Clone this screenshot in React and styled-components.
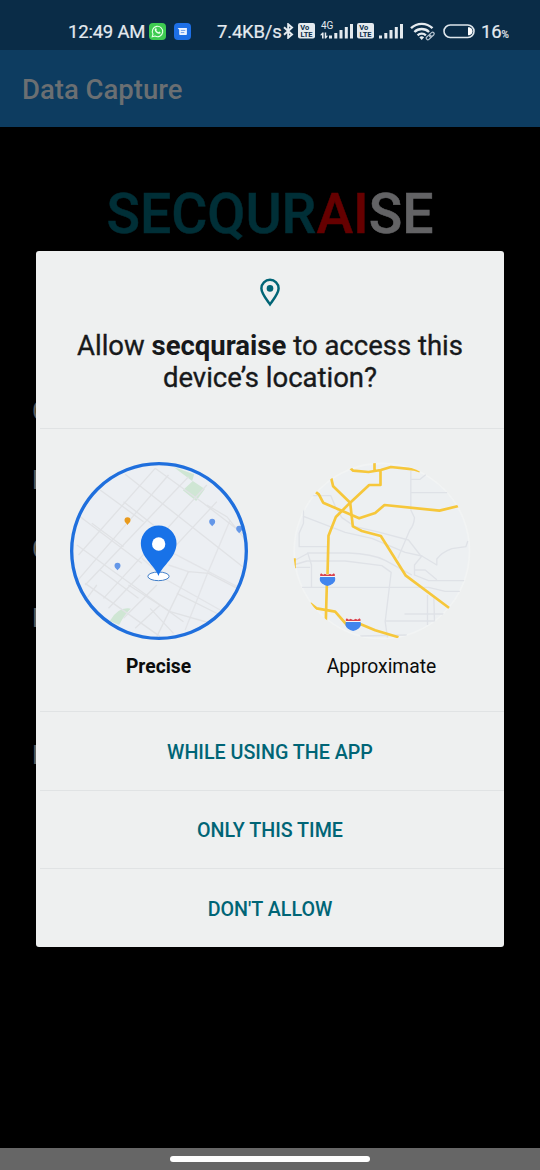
import React from 'react';
import styled, { createGlobalStyle } from 'styled-components';

const GlobalStyle = createGlobalStyle`
  * { box-sizing: border-box; }
  body { margin: 0; background: #000; font-family: Roboto, "Liberation Sans", sans-serif; }
`;

const Screen = styled.div`
  position: relative;
  width: 540px;
  height: 1170px;
  display: flex;
  flex-direction: column;
  overflow: hidden;
  background: #000;
`;

const StatusBar = styled.header`
  height: 50px;
  flex: none;
  padding: 12px 0 0 68px;
  display: grid;
  grid-template-columns: 81px 25px 43px 66px 15px 22px 37px 22px 31px 33px 38px 39px;
  align-items: center;
  align-content: start;
  grid-auto-rows: 38px;
  background: #0a2c47;
  color: #e4eaef;
  svg { display: block; }
`;

const StatusText = styled.span`
  padding-top: 1px;
  font-size: 18.5px;
  line-height: 38px;
  height: 38px;
  white-space: nowrap;
  letter-spacing: ${(p) => p.$spacing || '0'};
  -webkit-text-stroke: 0.2px #e4eaef;
  small { font-size: 10px; line-height: 1; }
`;

const AppBar = styled.div`
  height: 77px;
  flex: none;
  display: flex;
  align-items: center;
  padding: 2px 22px 0;
  background: #0d3c60;
  color: #6b6f72;
  font-size: 27.5px;
  font-weight: 500;
`;

const Page = styled.main`
  flex: 1;
  display: flex;
  flex-direction: column;
`;

const Brand = styled.h1`
  margin: 54px 0 0;
  text-align: center;
  font-size: 55.3px;
  line-height: 67px;
  font-weight: 500;
  color: #002f37;
  -webkit-text-stroke: 0.5px currentColor;
`;

const BrandPart = styled.span`
  color: ${(p) => p.$color};
  -webkit-text-stroke-color: ${(p) => p.$color};
`;

const Fields = styled.div`
  display: flex;
  flex-direction: column;
  padding: 129px 0 0 32px;
`;

const Field = styled.div`
  height: ${(p) => p.$height || 69}px;
  line-height: 69px;
  font-size: 25px;
  color: #5f5f5f;
`;

const NavBar = styled.footer`
  height: 22px;
  flex: none;
  display: flex;
  justify-content: center;
  padding-top: 8px;
  background: #666;
`;

const NavHandle = styled.div`
  width: 200px;
  height: 6px;
  border-radius: 3px;
  background: #fff;
`;

const Dialog = styled.section`
  position: absolute;
  left: 36px;
  top: 251px;
  width: 468px;
  height: 695.5px;
  display: flex;
  flex-direction: column;
  border-radius: 3px;
  background: #eef0f0;
`;

const DialogHead = styled.div`
  height: 177px;
  display: flex;
  flex-direction: column;
  align-items: center;
  padding-top: 27px;
`;

const Title = styled.h2`
  margin: 23px 0 0;
  text-align: center;
  font-size: 27.5px;
  line-height: 32px;
  font-weight: 400;
  color: #17191b;
  white-space: nowrap;
  -webkit-text-stroke: 0.35px #17191b;
  strong { font-weight: 700; -webkit-text-stroke: 0; }
`;

const Divider = styled.hr`
  flex: none;
  height: 1px;
  margin: 0 0 0 4px;
  border: 0;
  background: #e0e3e4;
`;

const Choices = styled.div`
  height: 282px;
  display: flex;
  justify-content: space-between;
  padding: 32px 32.5px 0;
`;

const Choice = styled.div`
  width: 180px;
  display: flex;
  flex-direction: column;
  align-items: center;
  gap: 14px;
  font-size: 19.3px;
  line-height: 24px;
  font-weight: ${(p) => (p.$selected ? 700 : 400)};
  color: #0b0c0c;
  svg { display: block; }
`;

const Action = styled.button`
  height: 77.5px;
  border: 0;
  padding: 3px 0 0;
  background: none;
  color: #006576;
  font: 500 19.7px Roboto, "Liberation Sans", sans-serif;
`;

const WhatsAppIcon = () => (
  <svg width="17" height="17" viewBox="0 0 17 17">
    <rect width="17" height="17" rx="4" fill="#3ecb51" />
    <path d="M3.2 13.8l.8-2.8a5.2 5.2 0 1 1 2 2z" fill="none" stroke="#e8ffe9" strokeWidth="1.1" />
    <path d="M6.3 5.5c.4-.5 1-.4 1.1 0l.4 1-.5.8c.5 1 1.2 1.6 2.2 2l.7-.7 1.3.6c.3 1-1 1.7-1.8 1.6-2.2-.4-3.9-2.5-4-4 0-.5.2-.9.6-1.3z" fill="#e8ffe9" />
  </svg>
);

const MessagesIcon = () => (
  <svg width="17" height="17" viewBox="0 0 17 17">
    <rect width="17" height="17" rx="4" fill="#1d6fe6" />
    <path d="M3.6 5h9.3v6.2q0 .8-.8.8H6q-.8 0-.8-.8V6.700z" fill="#eef4ff" />
    <path d="M6.800 7.400h4.500M6.800 9.600h3.500" stroke="#5b93e8" strokeWidth=".9" />
  </svg>
);

const BluetoothIcon = () => (
  <svg width="11" height="16" viewBox="0 0 11 16">
    <path d="M1 4.200l8 7.200-3.800 3.300V1.300L9 4.600l-8 7.200" fill="none" stroke="#e4eaef" strokeWidth="2" />
  </svg>
);

const VolteIcon = () => (
  <svg width="17" height="16" viewBox="0 0 17 16">
    <rect width="17" height="15.500" rx="2" fill="#e4eaef" />
    <g fill="#0a2c47" fontFamily="Roboto, sans-serif" fontWeight="700" fontSize="7.500">
      <text x="2.200" y="7">Vo</text>
      <text x="2.500" y="14" textLength="12">LTE</text>
    </g>
  </svg>
);

const SignalBars = ({ labelled }) => (
  <svg width={labelled ? 34 : 25} height="22" viewBox={labelled ? '-9 0 34 22' : '0 0 25 22'} overflow="visible">
    <g fill="#e4eaef">
      <rect x="0" y="15.500" width="3" height="3" />
      <rect x="5.300" y="13" width="3" height="5.500" />
      <rect x="10.500" y="10" width="3" height="8.500" />
      <rect x="15.800" y="7" width="3" height="11.500" />
      <rect x="21" y="4" width="3" height="14.500" />
      {labelled && (
        <>
          <text x="-8" y="9" fontSize="10" fontFamily="Roboto, sans-serif">4G</text>
          <path d="M-9 15.200L-6.600 12.500H-5.400V18.500H-7V15.200zM-1 15.800L-3 18.500H-4.300V12.500H-2.800V15.800z" />
        </>
      )}
    </g>
  </svg>
);

const WifiIcon = () => (
  <svg width="27" height="19" viewBox="0 0 27 19">
    <g fill="none" stroke="#e4eaef" strokeWidth="2.400">
      <path d="M1 6.200a15.500 15.500 0 0 1 21.500 0" />
      <path d="M4.400 10a10.600 10.600 0 0 1 14.700 0" />
      <path d="M7.600 13.300a6 6 0 0 1 8.300 0" />
    </g>
    <path d="M9.300 15.300q2.400-2 4.800 0l-2.400 2.600z" fill="#e4eaef" />
    <g fill="none" stroke="#b5c3d0" strokeWidth="1.200">
      <rect x="16" y="13.800" width="5.500" height="3.200" rx="1.600" transform="rotate(-42 18.700 15.400)" />
      <rect x="19" y="11" width="5.500" height="3.200" rx="1.600" transform="rotate(-42 21.700 12.600)" />
    </g>
  </svg>
);

const BatteryIcon = () => (
  <svg width="33" height="15" viewBox="0 0 33 15">
    <rect x="1" y="1" width="30" height="12.500" rx="6.200" fill="none" stroke="#dde5eb" strokeWidth="1.600" />
    <path d="M25 3.300h1.500q3 1.200 3 4t-3 4H25z" fill="#fff" />
  </svg>
);

const LocationIcon = () => (
  <svg width="22" height="29" viewBox="0 0 22 29">
    <path d="M11 26.300C7 20.700 2.400 15.200 2.400 10.400a8.600 8.600 0 0 1 17.200 0C19.600 15.200 15 20.700 11 26.300z" fill="none" stroke="#006576" strokeWidth="2.500" />
    <circle cx="11" cy="10.400" r="3.300" fill="#006576" />
  </svg>
);

const Poi = ({ x, y, color = '#6497e8' }) => (
  <path transform={`translate(${x} ${y})`} d="M0 12C-3 7-9 5-9-2a9 9 0 0 1 18 0C9 5 3 7 0 12z" fill={color} />
);

const PreciseMap = () => (
  <svg width="180" height="180" viewBox="26.5 18 540 540">
    <defs>
      <clipPath id="precise-clip"><circle cx="296" cy="288" r="262" /></clipPath>
    </defs>
    <circle cx="296" cy="288" r="262" fill="#eceff3" />
    <g clipPath="url(#precise-clip)">
      <path d="M340 36l62 22-6 20z M398 78l36 24-26 36-40-32z M205 460q-34-2-56 38l28 12q14-30 35-49z" fill="#cfe6d4" />
      <g fill="none" stroke="#e0e2e5" strokeWidth="4">
        <path d="M195 58L560 345M120 105L250 200M60 185L245 325M50 270L370 500M285 40L430 145L560 245M440 150L500 185L560 260" />
        <path d="M285 40L55 300M325 60L45 385M385 65L75 390M440 90L130 430M470 140L330 290" />
        <path d="M95 205L190 275M190 140L330 250M75 385L300 545M120 345L235 430M205 390L330 470L470 510" />
        <path d="M145 460L240 360M190 490L290 390M225 520L300 450M290 545L385 350M385 350L445 355L560 415" />
        <path d="M325 330L385 350M245 310L320 375L480 465M510 195L440 360L375 525M330 290L560 410" opacity=".85" />
        <path d="M350 415L480 480M270 460L340 535M110 390L80 430" />
      </g>
      <Poi x={202} y={198} color="#e99a1c" />
      <Poi x={456} y={202} />
      <Poi x={537} y={223} />
      <Poi x={172} y={334} />
    </g>
    <circle cx="296.500" cy="288" r="262" fill="none" stroke="#1f6fdd" strokeWidth="10" />
    <ellipse cx="295" cy="364" rx="32" ry="13" fill="#fff" stroke="#427fc9" strokeWidth="3" />
    <path d="M295 363C282 329 242 308 242 265a53 53 0 0 1 107 0C349 308 308 329 295 363z" fill="#1872e8" />
    <circle cx="295.500" cy="267" r="20" fill="#fff" />
  </svg>
);

const Shield = ({ x, y }) => (
  <g transform={`translate(${x} ${y})`}>
    <path d="M-22-7H22Q26 5 17 13Q10 19 0 21Q-10 19-17 13Q-26 5-22-7z" fill="#4285ee" />
    <path d="M-22-6V-16L-19-18L-13-14L-8-17L0-13L8-17L13-14L19-18L22-16V-6z" fill="#f5f7fa" />
    <path d="M-22-9V-14L-19-17L-13-13L-8-16L0-12L8-16L13-13L19-17L22-14V-9z" fill="#d9434e" />
  </g>
);

const ApproximateMap = () => (
  <svg width="180" height="180" viewBox="20.5 18 540 540">
    <defs>
      <clipPath id="approx-clip"><circle cx="290" cy="288" r="265" /></clipPath>
    </defs>
    <circle cx="290" cy="288" r="263" fill="#edf0f2" stroke="#f2f4f4" strokeWidth="5" />
    <g clipPath="url(#approx-clip)">
      <g fill="none" stroke="#dfe2e7" strokeWidth="4" strokeLinejoin="round">
        <path d="M377 48V165L388 188Q386 212 374 225L338 310M377 73H405L423 58M377 113H486" />
        <path d="M80 122H137L152 158L170 188L210 215L275 230L370 255L405 300L455 330V312Q470 292 500 281L542 275L548 258" />
        <path d="M55 160V205L42 235V275H130M55 184L180 232L260 250L360 292L410 303L388 330V360L430 377H537" />
        <path d="M25 318L70 294H190Q260 296 300 316L380 360M25 310V330L65 318H180L290 332L318 352L300 500L307 548" />
        <path d="M30 337H75M67 292L79 330V396M50 397H430L480 409H524M388 345H420L455 374" />
        <path d="M300 498H448L446 430M427 420V510M358 477H475M225 543L365 540" />
      </g>
      <g fill="none" stroke="#f6c73b" strokeWidth="8" strokeLinejoin="round">
        <path d="M196 40L204 47L250 51L287 45L317 36L385 43L404 49M268 23V47M286 45V90H252L195 143L152 186L130 242L127 360M125 390L122 497" />
        <path d="M138 69L144 94L195 143L203 214L230 228L287 243L362 362L492 459" />
        <path d="M90 110L101 118L114 143L222 190L270 174L298 150L463 167L520 153" />
        <path d="M75 445L94 460L150 470L188 513M225 507L270 526L340 547M28 310V340" />
      </g>
      <Shield x={127} y={372} />
      <Shield x={204} y={507} />
    </g>
  </svg>
);

const ACTIONS = ['WHILE USING THE APP', 'ONLY THIS TIME', "DON'T ALLOW"];

export default function App() {
  return (
    <>
      <GlobalStyle />
      <Screen>
        <StatusBar>
          <StatusText $spacing="-0.2px">12:49 AM</StatusText>
          <WhatsAppIcon />
          <MessagesIcon />
          <StatusText $spacing="-0.2px">7.4KB/s</StatusText>
          <BluetoothIcon />
          <VolteIcon />
          <SignalBars labelled />
          <VolteIcon />
          <SignalBars />
          <WifiIcon />
          <BatteryIcon />
          <StatusText $spacing="-0.2px">16<small>%</small></StatusText>
        </StatusBar>
        <AppBar>Data Capture</AppBar>
        <Page>
          <Brand>
            SECQUR<BrandPart $color="#660000">AI</BrandPart><BrandPart $color="#636365">SE</BrandPart>
          </Brand>
          <Fields>
            <Field>C</Field>
            <Field>P</Field>
            <Field>C</Field>
            <Field $height={137}>E</Field>
            <Field>E</Field>
          </Fields>
        </Page>
        <NavBar><NavHandle /></NavBar>
        <Dialog>
          <DialogHead>
            <LocationIcon />
            <Title>
              Allow <strong>secquraise</strong> to access this<br />device’s location?
            </Title>
          </DialogHead>
          <Divider />
          <Choices>
            <Choice $selected><PreciseMap />Precise</Choice>
            <Choice><ApproximateMap />Approximate</Choice>
          </Choices>
          {ACTIONS.map((label) => (
            <React.Fragment key={label}>
              <Divider />
              <Action>{label}</Action>
            </React.Fragment>
          ))}
        </Dialog>
      </Screen>
    </>
  );
}
